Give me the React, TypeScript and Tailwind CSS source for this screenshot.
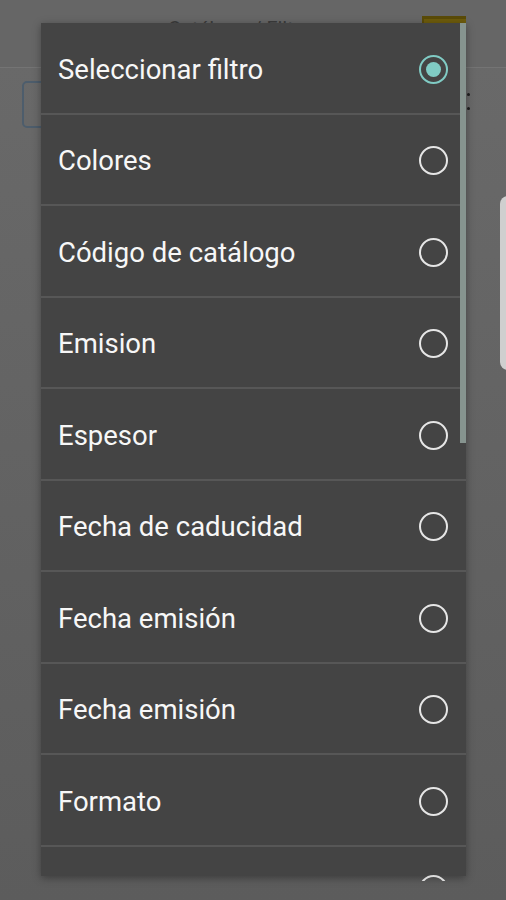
import React from 'react';

const filters = [
  'Seleccionar filtro',
  'Colores',
  'Código de catálogo',
  'Emision',
  'Espesor',
  'Fecha de caducidad',
  'Fecha emisión',
  'Fecha emisión',
  'Formato',
  '',
];

// Radio ring, filled when selected
const Radio: React.FC<{ checked?: boolean }> = ({ checked }) => (
  <span
    className={`flex h-[29px] w-[29px] shrink-0 items-center justify-center rounded-full border-[2.5px] ${
      checked ? 'border-[#80cbc4]' : 'border-[#e6e6e6]'
    }`}
  >
    {checked && <span className="h-[15px] w-[15px] rounded-full bg-[#80cbc4]" />}
  </span>
);

export default function App() {
  return (
    <div
      className="relative h-[900px] w-[506px] overflow-hidden bg-gradient-to-b from-[#6a6a6a] to-[#5c5c5c]"
      style={{ fontFamily: 'Roboto, "Liberation Sans", sans-serif' }}
    >
      {/* Page behind the dimmed overlay */}
      <div className="flex h-[68px] items-start border-b border-[#747474] bg-[#666666]">
        <span className="ml-[168px] mt-[14px] text-[20px] text-[#3c3c3c]">Catálogo / Filtros</span>
        <span className="ml-auto mr-[40px] mt-[16px] h-[34px] w-[44px] border-t-[3px] border-l-2 border-[#5a4b08] bg-[#6e5c0c]" />
      </div>
      <div className="ml-[22px] mt-[13px] h-[47px] w-[60px] rounded-[5px] border-2 border-[#4d5d6c]" />
      <div className="absolute left-[466px] top-[93px] flex flex-col gap-[11px] pl-[1px]">
        <span className="h-[3px] w-[3px] rounded-full bg-[#1e1e1e]" />
        <span className="h-[3px] w-[3px] rounded-full bg-[#1e1e1e]" />
      </div>
      <div className="absolute left-[500px] top-[196px] h-[174px] w-[20px] rounded-l-[8px] bg-[#cfcfcf]" />

      {/* Filter dialog */}
      <div className="absolute left-[41px] top-[23px] h-[853px] w-[425px] overflow-hidden bg-[#444444] shadow-[0_2px_8px_rgba(0,0,0,0.35)]">
        {filters.map((f, i) => (
          <div
            key={i}
            className="flex h-[91.5px] items-center border-b-2 border-[#575757] pl-[17px] pr-[18px] pt-[3px]"
          >
            <span className="flex-1 text-[27.5px] leading-none text-[#f7f7f7]">{f}</span>
            {f && <Radio checked={i === 0} />}
          </div>
        ))}
        <div className="absolute right-0 top-0 h-[420px] w-[6px] bg-[#86948f]" />
      </div>
      <div className="absolute left-[419px] top-[875px] h-[6px] w-[29px] overflow-hidden">
        <span className="block h-[29px] w-[29px] rounded-full border-[2.5px] border-[#dcdcdc]" />
      </div>
    </div>
  );
}
